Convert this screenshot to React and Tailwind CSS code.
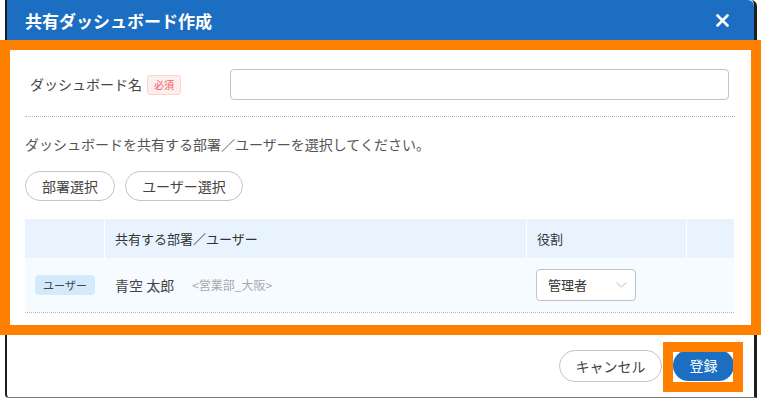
const font = { fontFamily: '"Noto Sans CJK JP", "Noto Sans", sans-serif' };

const CloseIcon = () => (
  <svg width="13" height="13" viewBox="0 0 13 13" fill="none">
    <path d="M1.5 1.5 L11.5 11.5 M11.5 1.5 L1.5 11.5" stroke="white" strokeWidth="2.6" strokeLinecap="round" />
  </svg>
);

const Chevron = () => (
  <svg width="11" height="6" viewBox="0 0 11 6" fill="none">
    <path d="M0.5 0.5 L5.5 5 L10.5 0.5" stroke="#b8bcc4" strokeWidth="1" />
  </svg>
);

const App = () => {
  return (
    <div className="relative w-[761px] h-[398px] bg-white overflow-hidden text-[#333]" style={font}>
      <div className="ml-[5px] w-[752px] h-[398px] flex flex-col border-l-2 border-r-[3px] border-b border-[#1e1e1e] border-b-[#777] rounded-tr-md rounded-bl-sm bg-white">
        <div className="h-[40px] shrink-0 bg-[#1b6ec2] rounded-tr-md flex items-center justify-between pl-[18px] pr-[25px]">
          <h1 className="text-white text-[17px] font-semibold leading-none">共有ダッシュボード作成</h1>
          <CloseIcon />
        </div>

        <div className="px-[18px] pr-[19px] pt-[29px]">
          <div className="flex items-center">
            <div className="w-[205px] flex items-center pl-[5px]">
              <span className="text-[14px] text-[#444]">ダッシュボード名</span>
              <span className="ml-[5px] w-[34px] h-[20px] flex items-center justify-center rounded-[3px] border border-[#fbd3d3] bg-[#fdeeee] text-[#f05a5a] text-[10px]">必須</span>
            </div>
            <input className="w-[499px] h-[31px] border border-[#bfc3ca] rounded-[4px] outline-none px-2 text-[14px]" />
          </div>

          <div className="mt-[16px] border-t border-dotted border-[#b5b5b5]" />

          <p className="mt-[17px] text-[14px] leading-[20px] text-[#555]">ダッシュボードを共有する部署／ユーザーを選択してください。</p>

          <div className="mt-[17px] flex gap-[10px]">
            <button className="h-[30px] w-[90px] rounded-full border border-[#c4c4c4] text-[14px] text-[#444] bg-white">部署選択</button>
            <button className="h-[30px] w-[118px] rounded-full border border-[#c4c4c4] text-[14px] text-[#444] bg-white">ユーザー選択</button>
          </div>

          <div className="mt-[18px] w-[709px] border-b border-dotted border-[#b5b5b5]">
            <div className="grid grid-cols-[79px_422px_160px_48px] h-[39px] bg-[#e8f3fe] text-[13px] text-[#333]">
              <div />
              <div className="border-l border-white pl-[10px] flex items-center">共有する部署／ユーザー</div>
              <div className="border-l border-white pl-[10px] flex items-center">役割</div>
              <div className="border-l border-white" />
            </div>
            <div className="grid grid-cols-[79px_422px_160px_48px] h-[54px] bg-[#f6fbff]">
              <div className="flex items-center pl-[10px]">
                <span className="w-[60px] h-[20px] rounded-[4px] bg-[#d3e9fc] text-[11px] text-[#444] flex items-center justify-center">ユーザー</span>
              </div>
              <div className="flex items-center pl-[11px]">
                <span className="text-[14px] text-[#444]">青空 太郎</span>
                <span className="ml-[18px] text-[12px] text-[#a8a8a8]">&lt;営業部_大阪&gt;</span>
              </div>
              <div className="flex items-center pl-[10px]">
                <div className="w-[100px] h-[32px] border border-[#bfc3ca] rounded-[4px] bg-white flex items-center justify-between pl-[11px] pr-[8px]">
                  <span className="text-[13px] text-[#333]">管理者</span>
                  <Chevron />
                </div>
              </div>
              <div />
            </div>
          </div>
        </div>

        <div className="mt-[37px] flex justify-end gap-[11px] pr-[20px]">
          <button className="h-[32px] w-[103px] rounded-full border border-[#c4c4c4] text-[14px] text-[#444] bg-white">キャンセル</button>
          <button className="h-[31px] w-[61px] rounded-full bg-[#1b6ec2] text-[14px] text-white">登録</button>
        </div>
      </div>

      <div className="absolute left-0 top-[40px] w-[761px] h-[295px] border-[10px] border-[#ff8000] pointer-events-none" />
      <div className="absolute left-[663px] top-[342px] w-[80px] h-[50px] border-[10px] border-[#ff8000] pointer-events-none" />
    </div>
  );
};

export default App;
